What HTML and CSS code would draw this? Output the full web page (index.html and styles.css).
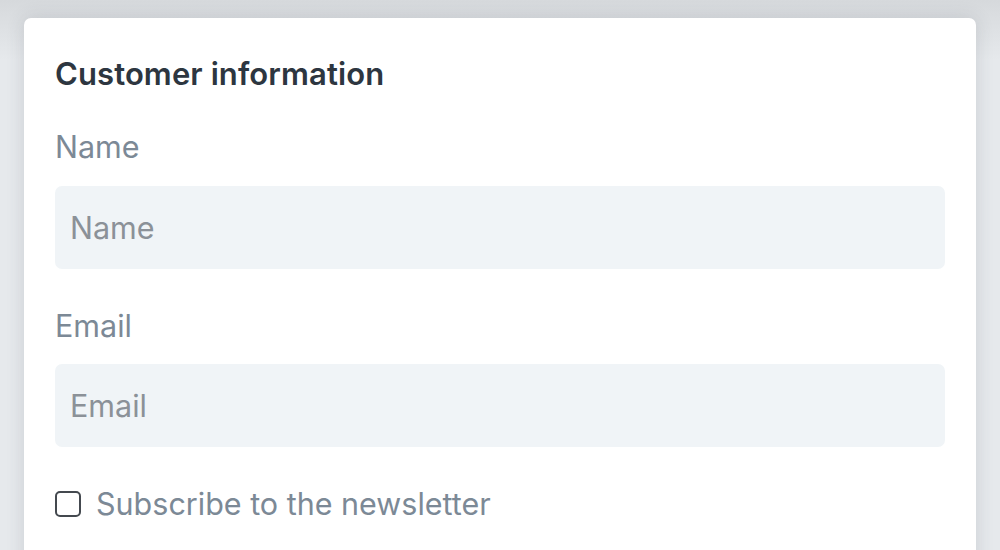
FILE: index.html
```html
<!DOCTYPE html>
<html lang="en">
<head>
<meta charset="utf-8">
<title>Customer information</title>
<link rel="stylesheet" href="styles.css">
</head>
<body>
<main class="page">
  <form class="card">
    <h2 class="card-title">Customer information</h2>
    <label class="field">
      <span class="field-label">Name</span>
      <input class="field-input" type="text" placeholder="Name">
    </label>
    <label class="field">
      <span class="field-label">Email</span>
      <input class="field-input" type="email" placeholder="Email">
    </label>
    <label class="check">
      <input class="check-box" type="checkbox">
      <span class="check-label">Subscribe to the newsletter</span>
    </label>
  </form>
</main>
</body>
</html>
```

FILE: styles.css
```css
* { box-sizing: border-box; }
html, body { margin: 0; height: 100%; }
body {
  background: #e6e9ec;
  font-family: Inter, "Liberation Sans", sans-serif;
  overflow: hidden;
}
.page {
  padding: 18px 24px 0;
  background: linear-gradient(#d6d9dc, #e6e9ec 60px);
  height: 100%;
}
.card {
  background: #fff;
  border-radius: 7px;
  box-shadow: 0 0 18px rgba(60, 70, 80, 0.16);
  padding: 40px 31px 40px;
  display: flex;
  flex-direction: column;
  min-height: 600px;
}
.card-title {
  margin: 0 0 43px;
  font-size: 31px;
  font-weight: 600;
  line-height: 1;
  color: #2d3640;
  letter-spacing: 0.1px;
}
.field {
  display: flex;
  flex-direction: column;
  margin-bottom: 42px;
}
.field-label {
  font-size: 30.5px;
  line-height: 1;
  color: #7c8996;
  margin-bottom: 23px;
}
.field-input {
  height: 83px;
  border: none;
  border-radius: 7px;
  background: #f0f4f7;
  padding: 0 15px;
  font-family: inherit;
  font-size: 30.5px;
  color: #2d3640;
  outline: none;
}
.field-input::placeholder { color: #8b9198; }
.check {
  display: flex;
  align-items: center;
  gap: 15px;
}
.check-box {
  appearance: none;
  -webkit-appearance: none;
  margin: 0;
  width: 26px;
  height: 26px;
  border: 2px solid #44494f;
  border-radius: 5px;
  background: #fff;
}
.check-label {
  font-size: 30.5px;
  line-height: 1;
  color: #7c8996;
}
```
